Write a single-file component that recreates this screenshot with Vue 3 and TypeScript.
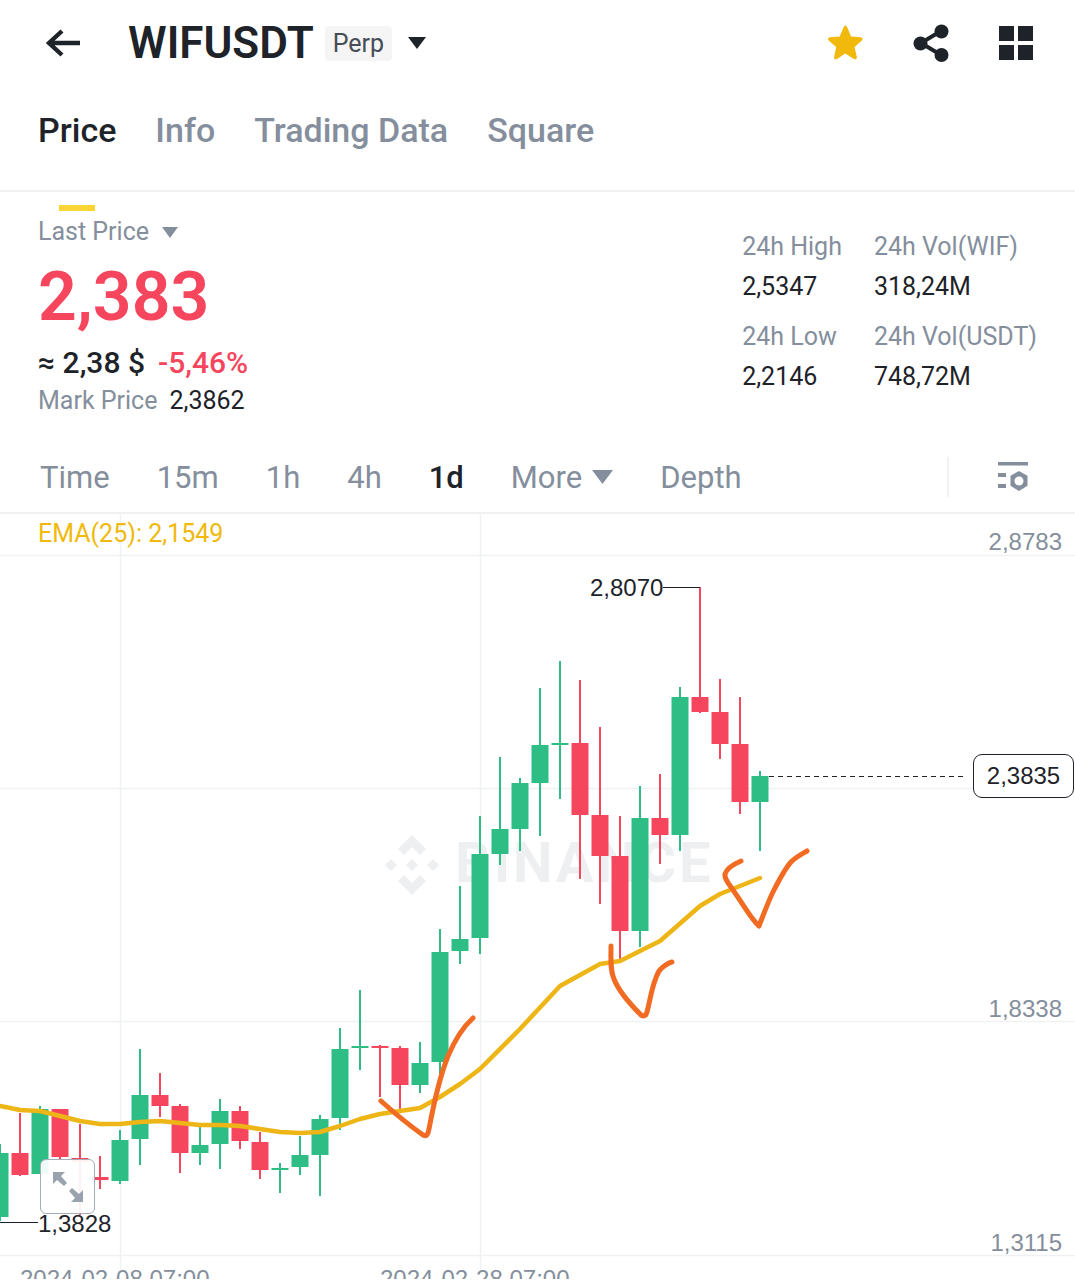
<template>
  <div class="screen">
    <header class="topbar">
      <svg class="back" width="40" height="32" viewBox="0 0 40 32">
        <path d="M37 16H7M19 4 6 16l13 12" fill="none" stroke="#1e2329" stroke-width="4.4" />
      </svg>
      <h1 class="symbol">WIFUSDT</h1>
      <span class="perp">Perp</span>
      <svg class="caret" width="20" height="14" viewBox="0 0 20 14">
        <path d="M1 1h18l-9 12z" fill="#1e2329" />
      </svg>
      <div class="topbar__actions">
        <svg width="40" height="40" viewBox="0 0 40 40">
          <path
            d="M20 2.5c1 0 1.700.6 2.200 1.700l3.900 9.200 9.600.8c1.900.2 2.600 2.100 1.200 3.400l-7.300 6.500 2.200 9.800c.4 1.800-1.300 3-2.900 2l-8.700-5.300-8.200 5.300c-1.600 1-3.300-.2-2.900-2l2.100-9.800-7.500-6.500c-1.400-1.300-.7-3.200 1.200-3.400l9.800-.8 3.900-9.200c.5-1.100 1.300-1.700 2.400-1.700z"
            fill="#f0b90b" />
        </svg>
        <svg width="40" height="40" viewBox="0 0 40 40">
          <path d="M29 8 9 20l20 12" fill="none" stroke="#1e2329" stroke-width="4" />
          <circle cx="29.500" cy="8.500" r="7" fill="#1e2329" />
          <circle cx="8.500" cy="20.500" r="7" fill="#1e2329" />
          <circle cx="29.500" cy="32" r="7" fill="#1e2329" />
        </svg>
        <svg width="34" height="34" viewBox="0 0 34 34">
          <path d="M0 0h15v15H0zM19 0h15v15H19zM0 19h15v15H0zM19 19h15v15H19z" fill="#1e2329" />
        </svg>
      </div>
    </header>

    <nav class="tabs">
      <span v-for="t in tabs" :key="t" class="tab" :class="{ 'tab--on': t === 'Price' }">{{ t }}</span>
    </nav>

    <section class="summary">
      <div class="summary__left">
        <div class="last-label">
          Last Price
          <svg width="16" height="11" viewBox="0 0 16 11"><path d="M0 0h16l-8 11z" fill="#848e9c" /></svg>
        </div>
        <div class="last-price">2,383</div>
        <div class="approx">
          <span class="approx__usd">≈ 2,38 $</span>
          <span class="approx__pct">-5,46%</span>
        </div>
        <div class="mark">
          <span class="muted">Mark Price</span>
          <span class="mark__val">2,3862</span>
        </div>
      </div>
      <div class="stats">
        <div v-for="s in stats" :key="s.label" class="stat">
          <span class="muted">{{ s.label }}</span>
          <span class="stat__val">{{ s.value }}</span>
        </div>
      </div>
    </section>

    <div class="ranges">
      <span class="range">Time</span>
      <span class="range">15m</span>
      <span class="range">1h</span>
      <span class="range">4h</span>
      <span class="range range--on">1d</span>
      <span class="range range--more">
        More
        <svg width="21" height="14" viewBox="0 0 21 14"><path d="M0 0h21l-10.500 14z" fill="#848e9c" /></svg>
      </span>
      <span class="range">Depth</span>
      <div class="ranges__tool">
        <svg width="32" height="32" viewBox="0 0 32 32">
          <path d="M1 1h30v3.500H1zM1 12h8v4H1zM1 23h8v4H1z" fill="#848e9c" />
          <path
            fill-rule="evenodd"
            d="M22 10l8.500 4.800v10L22 30l-8.500-5.200v-10zM22 15.500a4.500 4.500 0 1 0 0 9 4.500 4.500 0 0 0 0-9z"
            fill="#848e9c" />
        </svg>
      </div>
    </div>

    <div class="chart">
      <svg class="chart__svg" width="1075" height="765" viewBox="0 515 1075 765">
        <g stroke="#f0f1f2" stroke-width="1.500">
          <path d="M0 556.500H1075M0 789.500H1075M0 1022.500H1075M0 1256.500H1075" />
          <path d="M120.500 515V1270M480.500 515V1270" />
        </g>

        <g class="watermark" fill="#eeeff1">
          <path d="M412 836l14 14-6 6-8-8-8 8-6-6zM391 860l6 6-6 6-6-6zM433 860l6 6-6 6-6-6zM412 860l6 6-6 6-6-6zM412 896l-14-14 6-6 8 8 8-8 6 6z" />
          <text x="455" y="883" class="watermark__text">BINANCE</text>
        </g>

        <g v-for="c in candles" :key="c.x" :fill="c.up ? green : red">
          <rect :x="c.x - 1" :y="c.hi" width="2" :height="c.lo - c.hi" />
          <rect :x="c.x - 8.500" :y="c.top" width="17" :height="c.bot - c.top" />
        </g>

        <path :d="emaPath" fill="none" stroke="#eeb516" stroke-width="4.500" stroke-linejoin="round" stroke-linecap="round" />

        <g fill="none" stroke="#f26b23" stroke-width="5" stroke-linecap="round" stroke-linejoin="round">
          <path d="M381 1102c10 9 28 24 42 34 4 2 5-1 6-6 3-16 9-48 19-73 6-14 15-29 25-38" />
          <path d="M611 947c0 14-1 24 3 33 5 13 17 26 27 36 5 3 6-2 7-7 3-12 4-24 11-37 3-4 9-8 13-9" />
          <path d="M741 862c-7 3-14 7-16 13-1 5 5 11 10 19 8 11 16 26 24 33 4-10 9-24 14-34 5-10 11-22 18-30 5-5 11-8 16-11" />
        </g>

        <g class="axis">
          <text x="1062" y="551" text-anchor="end">2,8783</text>
          <text x="1062" y="1018" text-anchor="end">1,8338</text>
          <text x="1062" y="1252" text-anchor="end">1,3115</text>
          <text x="20" y="1288">2024-02-08 07:00</text>
          <text x="380" y="1288">2024-02-28 07:00</text>
        </g>

        <g class="marks">
          <path d="M663 588.500h37" stroke="#1e2329" stroke-width="1.200" />
          <path d="M0 1223.500h38" stroke="#1e2329" stroke-width="1.200" />
          <text x="590" y="597">2,8070</text>
          <text x="38" y="1233">1,3828</text>
        </g>
        <path d="M769 777.500H966" stroke="#1e2329" stroke-width="1.200" stroke-dasharray="5 4" />
      </svg>

      <div class="ema">EMA(25): 2,1549</div>
      <div class="price-tag">2,3835</div>
      <button class="expand" type="button" aria-label="Expand">
        <svg width="32" height="32" viewBox="0 0 32 32">
          <path d="M1 1h12L9 5l6 7-3 3-7-6-4 4zM31 31H19l4-4-6-7 3-3 7 6 4-4z" fill="#9aa2ae" />
        </svg>
      </button>
    </div>
  </div>
</template>

<script setup lang="ts">
import { computed } from "vue";

const green = "#2ebd85";
const red = "#f6465d";

const tabs = ["Price", "Info", "Trading Data", "Square"];

const stats = [
  { label: "24h High", value: "2,5347" },
  { label: "24h Vol(WIF)", value: "318,24M" },
  { label: "24h Low", value: "2,2146" },
  { label: "24h Vol(USDT)", value: "748,72M" },
];

// x, wick top, body top, body bottom, wick bottom, up
type Row = [number, number, number, number, number, boolean];
const rows: Row[] = [
  [0, 1145, 1154, 1218, 1222, true],
  [20, 1114, 1154, 1176, 1177, false],
  [40, 1107, 1110, 1175, 1175, true],
  [60, 1110, 1110, 1158, 1160, false],
  [80, 1125, 1159, 1163, 1216, false],
  [100, 1157, 1178, 1181, 1190, false],
  [120, 1131, 1141, 1182, 1185, true],
  [140, 1050, 1096, 1140, 1166, true],
  [160, 1074, 1096, 1107, 1118, false],
  [180, 1105, 1107, 1154, 1174, false],
  [200, 1128, 1146, 1154, 1166, true],
  [220, 1100, 1112, 1145, 1170, true],
  [240, 1107, 1112, 1142, 1150, false],
  [260, 1133, 1143, 1171, 1180, false],
  [280, 1164, 1169, 1171, 1194, true],
  [300, 1137, 1156, 1168, 1176, true],
  [320, 1116, 1120, 1156, 1197, true],
  [340, 1029, 1050, 1119, 1131, true],
  [360, 991, 1047, 1049, 1071, true],
  [380, 1046, 1047, 1049, 1098, false],
  [400, 1047, 1049, 1086, 1113, false],
  [420, 1043, 1064, 1086, 1094, true],
  [440, 930, 953, 1063, 1075, true],
  [460, 887, 940, 952, 965, true],
  [480, 817, 855, 939, 955, true],
  [500, 758, 830, 855, 866, true],
  [520, 779, 784, 830, 852, true],
  [540, 689, 746, 784, 837, true],
  [560, 662, 744, 746, 800, true],
  [580, 681, 744, 816, 880, false],
  [600, 728, 816, 857, 905, false],
  [620, 817, 857, 932, 961, false],
  [640, 787, 819, 932, 948, true],
  [660, 775, 819, 836, 865, false],
  [680, 688, 698, 836, 852, true],
  [700, 588, 698, 713, 714, false],
  [720, 680, 713, 745, 760, false],
  [740, 698, 745, 803, 815, false],
  [760, 772, 777, 803, 852, true],
];

const candles = rows.map(([x, hi, top, bot, lo, up]) => ({ x, hi, top, bot, lo, up }));

const ema: [number, number][] = [
  [0, 1107], [20, 1111], [40, 1112], [60, 1117], [80, 1122], [100, 1125], [120, 1125],
  [140, 1123], [160, 1122], [180, 1124], [200, 1126], [220, 1126], [240, 1127], [260, 1130],
  [280, 1133], [300, 1134], [320, 1133], [340, 1127], [360, 1120], [380, 1115], [420, 1109],
  [440, 1098], [460, 1085], [480, 1070], [520, 1030], [560, 987], [600, 965], [620, 962],
  [660, 942], [700, 907], [720, 895], [760, 879],
];

const emaPath = computed(() => "M" + ema.map((p) => p.join(" ")).join("L"));
</script>

<style scoped>
.screen {
  width: 1075px;
  height: 1280px;
  overflow: hidden;
  background: #fff;
  color: #1e2329;
  font-family: "Roboto", "Noto Sans", sans-serif;
  display: flex;
  flex-direction: column;
}

.topbar {
  height: 86px;
  display: flex;
  align-items: center;
  padding: 0 42px 0 43px;
  box-sizing: border-box;
}

.back {
  margin-right: 45px;
}

.symbol {
  margin: 0;
  font-size: 44px;
  font-weight: 600;
  line-height: 1;
}

.perp {
  margin-left: 11px;
  padding: 3px 8px;
  background: #f5f5f5;
  border-radius: 4px;
  font-size: 25px;
  color: #474d57;
}

.caret {
  margin-left: 15px;
}

.topbar__actions {
  margin-left: auto;
  display: flex;
  align-items: center;
  gap: 47px;
}

.tabs {
  height: 106px;
  display: flex;
  gap: 39px;
  padding: 24px 0 0 38px;
  box-sizing: border-box;
  border-bottom: 2px solid #f0f1f2;
}

.tab {
  position: relative;
  font-size: 34px;
  font-weight: 500;
  color: #848e9c;
}

.tab--on {
  color: #1e2329;
}

.tab--on::after {
  content: "";
  position: absolute;
  left: 21px;
  right: 21px;
  bottom: -21px;
  height: 6px;
  background: #fcd535;
}

.summary {
  height: 250px;
  display: flex;
  justify-content: space-between;
  padding: 0 38px;
  box-sizing: border-box;
}

.summary__left {
  display: flex;
  flex-direction: column;
  padding-top: 25px;
}

.last-label {
  display: flex;
  align-items: center;
  gap: 13px;
  font-size: 25px;
  line-height: 30px;
  color: #848e9c;
}

.last-price {
  margin-top: 14px;
  font-size: 68px;
  line-height: 72px;
  font-weight: 600;
  color: #f6465d;
}

.approx {
  display: flex;
  gap: 13px;
  margin-top: 12px;
  font-size: 30px;
  line-height: 36px;
  font-weight: 500;
}

.approx__pct {
  color: #f6465d;
}

.mark {
  display: flex;
  gap: 12px;
  margin-top: 5px;
  font-size: 25px;
  line-height: 30px;
}

.muted {
  color: #848e9c;
}

.stats {
  display: grid;
  grid-template-columns: auto auto;
  column-gap: 32px;
  row-gap: 20px;
  align-content: start;
  padding-top: 40px;
  margin-right: 0;
}

.stat {
  display: flex;
  flex-direction: column;
  gap: 10px;
  font-size: 25px;
  line-height: 30px;
}

.ranges {
  height: 72px;
  display: flex;
  align-items: center;
  gap: 47px;
  padding-left: 40px;
  box-sizing: border-box;
  border-bottom: 2px solid #f0f1f2;
}

.range {
  font-size: 31px;
  color: #848e9c;
}

.range--on {
  color: #1e2329;
  font-weight: 500;
}

.range--more {
  display: flex;
  align-items: center;
  gap: 10px;
}

.ranges__tool {
  margin-left: auto;
  height: 40px;
  width: 128px;
  box-sizing: border-box;
  padding-left: 48px;
  border-left: 2px solid #f0f1f2;
  display: flex;
  align-items: center;
}

.chart {
  position: relative;
  flex: 1;
}

.chart__svg {
  display: block;
}

.watermark__text {
  font-family: "Roboto", sans-serif;
  font-size: 56px;
  font-weight: 700;
  letter-spacing: 3px;
}

.axis text {
  font-family: "Liberation Sans", sans-serif;
  font-size: 24px;
  fill: #848e9c;
}

.marks text {
  font-family: "Liberation Sans", sans-serif;
  font-size: 24px;
  fill: #1e2329;
}

.ema {
  position: absolute;
  left: 38px;
  top: 5px;
  font-size: 25px;
  line-height: 30px;
  color: #f0b90b;
}

.price-tag {
  position: absolute;
  left: 973px;
  top: 240px;
  width: 101px;
  height: 44px;
  box-sizing: border-box;
  border: 1.500px solid #1e2329;
  border-radius: 9px;
  background: #fff;
  font-family: "Liberation Sans", sans-serif;
  font-size: 24px;
  line-height: 41px;
  text-align: center;
}

.expand {
  position: absolute;
  left: 40px;
  top: 645px;
  width: 55px;
  height: 55px;
  padding: 0;
  display: flex;
  align-items: center;
  justify-content: center;
  border: 1.500px solid #a6adb7;
  border-radius: 6px;
  background: rgba(255, 255, 255, 0.92);
}
</style>

<style>
html,
body {
  margin: 0;
  background: #fff;
}
</style>
